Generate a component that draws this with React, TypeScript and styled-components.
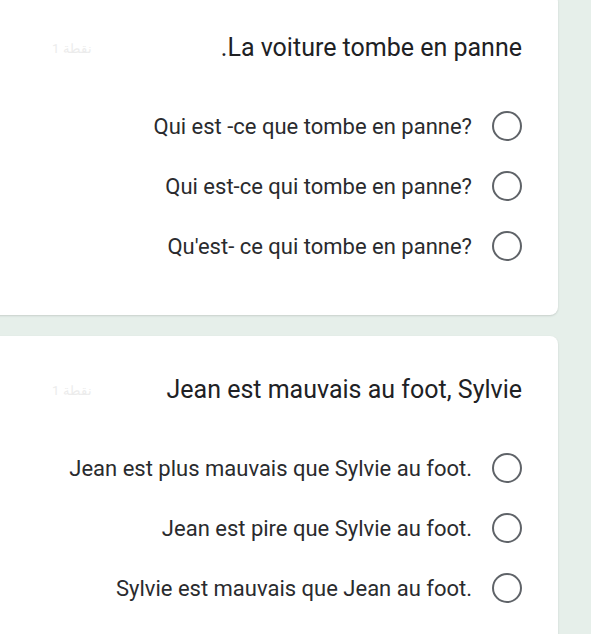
import React from 'react';
import styled, { createGlobalStyle } from 'styled-components';

const GlobalStyle = createGlobalStyle`
  html, body {
    margin: 0;
    padding: 0;
    background: #e6efea;
    font-family: Roboto, "Noto Sans", Arial, sans-serif;
    overflow: hidden;
  }
`;

const Page = styled.div`
  display: flex;
  flex-direction: column;
  gap: 21px;
  margin-top: -6px;
  margin-left: -12px;
  padding-right: 33px;
`;

const Card = styled.section`
  background: #fff;
  border-radius: 8px;
  box-shadow: 0 1px 2px rgba(60, 64, 67, 0.18);
  padding: 38px 36px 45px 24px;
  display: flex;
  flex-direction: column;
  gap: 38px;
`;

const Header = styled.div`
  display: flex;
  align-items: center;
  justify-content: space-between;
  height: 32px;
`;

const Points = styled.span`
  font-size: 13px;
  color: #ececec;
  padding-left: 40px;
  letter-spacing: 2px;
`;

const Title = styled.h2`
  margin: 0;
  font-size: 25px;
  font-weight: 400;
  color: #202124;
  line-height: 32px;
`;

const Options = styled.div`
  display: flex;
  flex-direction: column;
  gap: 12px;
`;

const Option = styled.label`
  display: flex;
  align-items: center;
  justify-content: flex-end;
  gap: 20px;
  height: 48px;
  cursor: pointer;
`;

const OptionText = styled.span`
  font-size: 22px;
  color: #2a2b2e;
`;

const Radio = styled.span`
  width: 30px;
  height: 30px;
  box-sizing: border-box;
  border: 2.5px solid #5f6368;
  border-radius: 50%;
  flex-shrink: 0;
`;

const questions = [
  {
    title: '.La voiture tombe en panne',
    options: [
      'Qui est -ce que tombe en panne?',
      'Qui est-ce qui tombe en panne?',
      "Qu'est- ce qui tombe en panne?",
    ],
  },
  {
    title: 'Jean est mauvais au foot, Sylvie',
    options: [
      'Jean est plus mauvais que Sylvie au foot.',
      'Jean est pire que Sylvie au foot.',
      'Sylvie est mauvais que Jean au foot.',
    ],
  },
];

export default function App() {
  return (
    <>
      <GlobalStyle />
      <Page>
        {questions.map((q, i) => (
          <Card key={i}>
            <Header>
              <Points>1 نقطة</Points>
              <Title>{q.title}</Title>
            </Header>
            <Options>
              {q.options.map(o => (
                <Option key={o}>
                  <OptionText>{o}</OptionText>
                  <Radio />
                </Option>
              ))}
            </Options>
          </Card>
        ))}
      </Page>
    </>
  );
}
